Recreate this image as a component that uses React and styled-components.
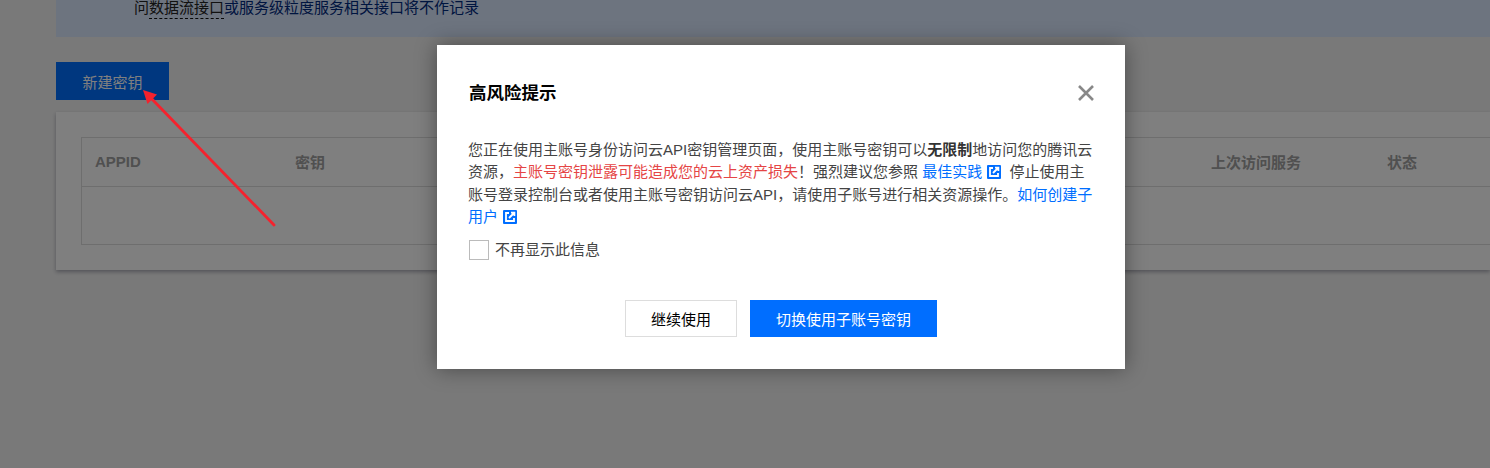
import React from "react";
import styled, { createGlobalStyle } from "styled-components";

const Global = createGlobalStyle`
  html, body { margin: 0; padding: 0; height: 468px; overflow: hidden; background: #f3f3f3; }
  #root { height: 468px; }
  * { box-sizing: border-box; }
`;
const FONT = `"Liberation Sans", "Noto Sans CJK SC", sans-serif`;

const Page = styled.div`
  position: relative;
  width: 1490px;
  height: 468px;
  overflow: hidden;
  padding-left: 56px;
  font-family: ${FONT};
  font-size: 15px;
  color: #000;
`;
const Notice = styled.div`
  height: 37px;
  background: #dbe8ff;
  padding-left: 78px;
  line-height: 15px;
  color: #002a80;
`;
const Dashed = styled.span`
  color: #222;
  border-bottom: 1px dashed #111;
  padding-bottom: 2px;
`;
const Dark = styled.span`color: #222;`;
const NewButton = styled.button`
  display: block;
  margin-top: 25px;
  width: 113px;
  height: 38px;
  border: 0;
  background: #006eff;
  color: #fff;
  font: 15px ${FONT};
  cursor: pointer;
`;
const Card = styled.div`
  margin-top: 12px;
  width: 1434px;
  height: 158px;
  padding: 25px 0 0 25px;
  background: #fff;
  box-shadow: 0 2px 4px rgba(54, 58, 80, 0.4);
  overflow: hidden;
`;
const Table = styled.div`
  width: 1500px;
  height: 108px;
  border: 1px solid #ddd;
`;
const HeadRow = styled.div`
  display: grid;
  grid-template-columns: 200px 916px 176px 1fr;
  height: 49px;
  padding-bottom: 2px;
  align-items: center;
  border-bottom: 1px solid #ddd;
`;
const HeadCell = styled.div`
  padding-left: 13px;
  font-weight: 700;
  color: #a0a0a0;
  font-size: 15px;
`;
const Overlay = styled.div`
  position: absolute;
  inset: 0;
  background: rgba(0, 0, 0, 0.5);
  display: flex;
  justify-content: center;
  align-items: flex-start;
  padding: 45px 0 0 72px;
`;
const Modal = styled.div`
  width: 688px;
  height: 324px;
  background: #fff;
  padding: 33px 32px 32px;
  position: relative;
  box-shadow: 0 0 20px rgba(0, 0, 0, 0.4);
`;
const Title = styled.h2`
  margin: 0;
  font: 700 17.5px/30px ${FONT};
  color: #000;
`;
const CloseButton = styled.button`
  position: absolute;
  top: 39px;
  right: 30px;
  width: 18px;
  height: 18px;
  padding: 0;
  border: 0;
  background: none;
  color: #888;
  display: flex;
`;
const Body = styled.p`
  margin: 31px -2px 0 -1px;
  font-size: 15px;
  line-height: 22.4px;
  color: #444;
`;
const Strong = styled.b`color: #333;`;
const Danger = styled.span`color: #e54545;`;
const Link = styled.a`
  color: #006eff;
  text-decoration: none;
`;
const LinkIcon = styled.svg`
  width: 14px;
  height: 14px;
  margin: 0 4px 0 5px;
  vertical-align: -2px;
`;
const CheckRow = styled.label`
  display: flex;
  align-items: center;
  gap: 6px;
  margin-top: 11px;
  font-size: 15px;
  line-height: 20px;
  color: #444;
`;
const Box = styled.span`
  width: 20px;
  height: 20px;
  border: 1px solid #bbb;
  background: #fff;
`;
const Footer = styled.div`
  display: flex;
  justify-content: center;
  gap: 13px;
  margin-top: 40px;
`;
const Action = styled.button`
  height: 37px;
  width: ${(p) => p.$w}px;
  font: 15px ${FONT};
  border: 1px solid ${(p) => (p.$primary ? "#006eff" : "#ddd")};
  background: ${(p) => (p.$primary ? "#006eff" : "#fff")};
  color: ${(p) => (p.$primary ? "#fff" : "#000")};
  cursor: pointer;
`;
const Arrow = styled.svg`
  position: absolute;
  left: 0;
  top: 0;
  pointer-events: none;
`;

const External = () => (
  <LinkIcon viewBox="0 0 14 14">
    <rect width="14" height="14" rx="1" fill="#006eff" />
    <path d="M6 3H3v8h8V8" fill="none" stroke="#fff" strokeWidth="1.8" />
    <path d="M6 8l5-5M8 2.6h3.4V6" fill="none" stroke="#fff" strokeWidth="1.8" />
  </LinkIcon>
);

export default function App() {
  return (
    <>
      <Global />
      <Page>
        <Notice>
          <Dark>问</Dark>
          <Dashed>数据流接口</Dashed>或服务级粒度服务相关接口将不作记录
        </Notice>
        <NewButton>新建密钥</NewButton>
        <Card>
          <Table>
            <HeadRow>
              <HeadCell>APPID</HeadCell>
              <HeadCell>密钥</HeadCell>
              <HeadCell>上次访问服务</HeadCell>
              <HeadCell>状态</HeadCell>
            </HeadRow>
          </Table>
        </Card>
        <Overlay>
          <Modal>
            <Title>高风险提示</Title>
            <CloseButton aria-label="关闭">
              <svg width="18" height="18" viewBox="0 0 18 18">
                <path d="M2 2l14 14M16 2L2 16" stroke="currentColor" strokeWidth="2.6" fill="none" />
              </svg>
            </CloseButton>
            <Body>
              您正在使用主账号身份访问云API密钥管理页面，使用主账号密钥可以<Strong>无限制</Strong>地访问您的腾讯云资源，
              <Danger>主账号密钥泄露可能造成您的云上资产损失</Danger>！强烈建议您参照 <Link>最佳实践</Link>
              <External /> 停止使用主账号登录控制台或者使用主账号密钥访问云API，请使用子账号进行相关资源操作。
              <Link>如何创建子用户</Link>
              <External />
            </Body>
            <CheckRow>
              <Box />
              不再显示此信息
            </CheckRow>
            <Footer>
              <Action $w={112}>继续使用</Action>
              <Action $w={187} $primary>切换使用子账号密钥</Action>
            </Footer>
          </Modal>
        </Overlay>
        <Arrow width="300" height="240" viewBox="0 0 300 240">
          <path d="M274 225L150 97" stroke="#f5222d" strokeWidth="2.8" strokeLinecap="round" fill="none" />
          <path d="M143 90l14 4.5-9.5 9.5z" fill="#f5222d" />
        </Arrow>
      </Page>
    </>
  );
}
